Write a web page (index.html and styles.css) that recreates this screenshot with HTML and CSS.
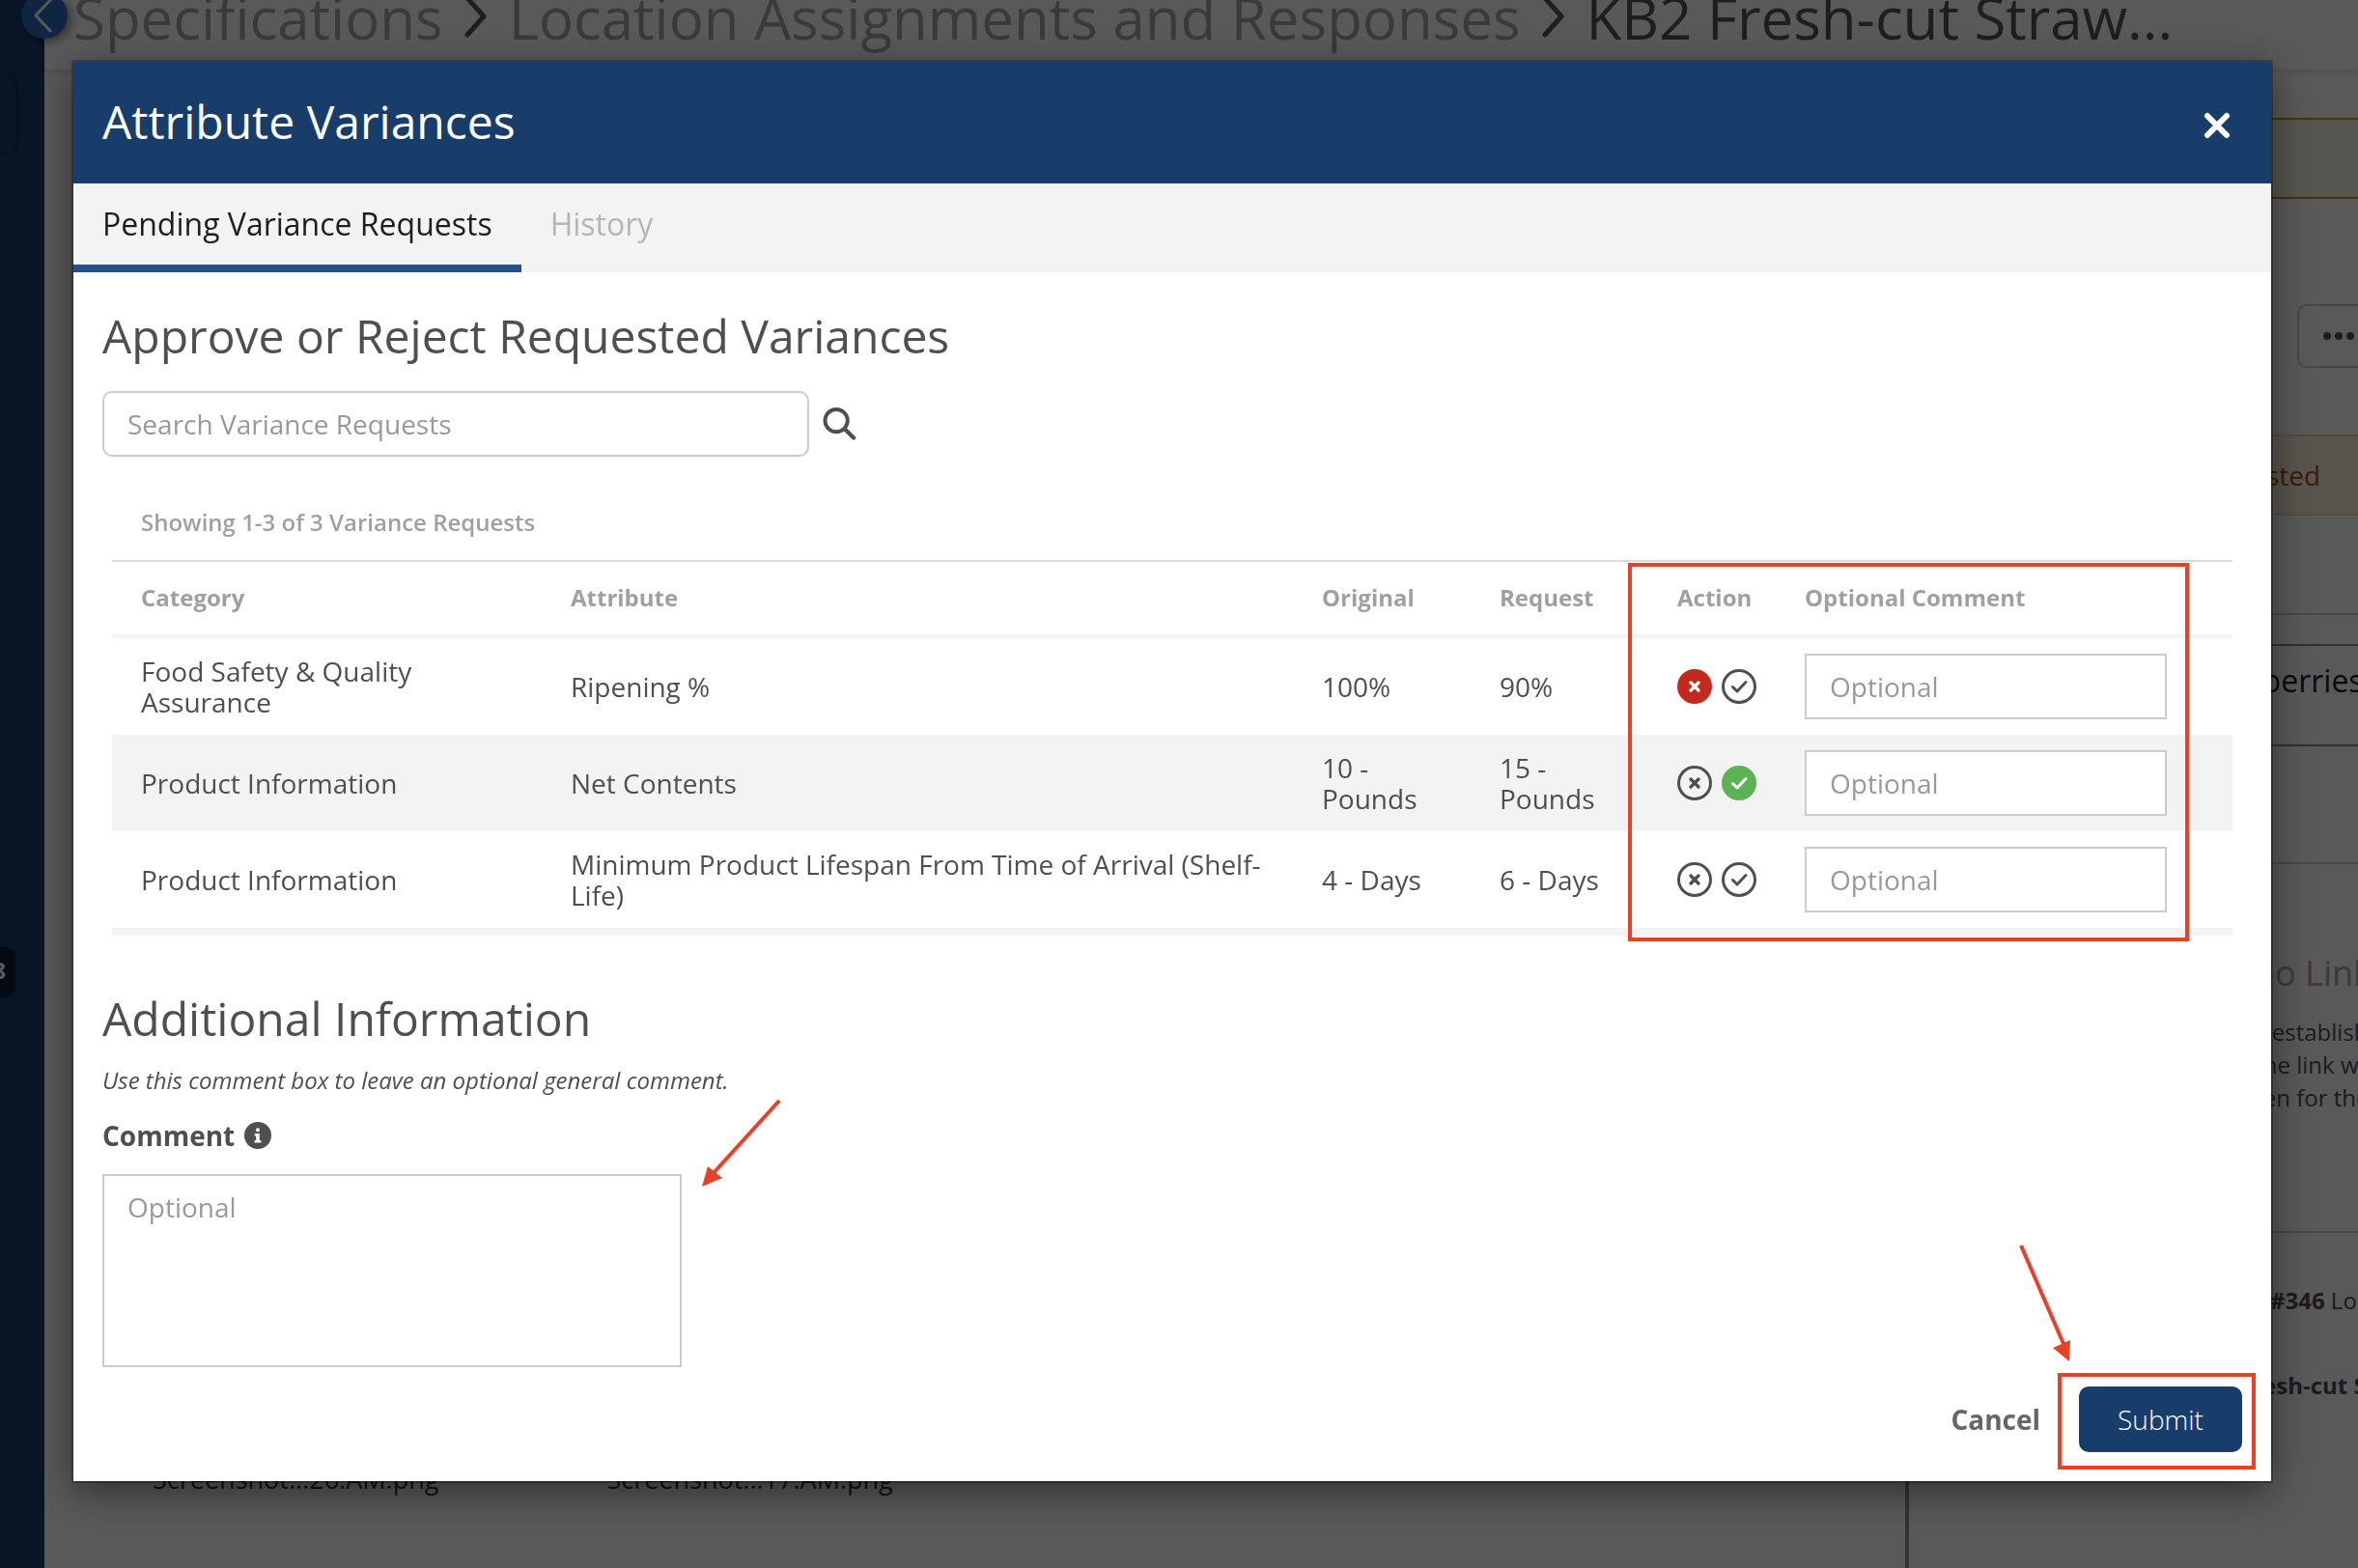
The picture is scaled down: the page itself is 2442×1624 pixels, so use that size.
FILE: index.html
```html
<!DOCTYPE html>
<html lang="en">
<head>
  <meta charset="utf-8">
  <title>Attribute Variances</title>
  <link rel="stylesheet" href="styles.css">
</head>
<body>
  <svg class="sprite" aria-hidden="true">
    <symbol id="icon-reject" viewBox="0 0 36 36">
      <path d="M14 14l8 8m0-8l-8 8" fill="none" stroke="currentColor" stroke-width="3.4" stroke-linecap="round"/>
    </symbol>
    <symbol id="icon-approve" viewBox="0 0 36 36">
      <path d="M11.5 18.5l4.5 4.5 9-9.5" fill="none" stroke="currentColor" stroke-width="3" stroke-linecap="round" stroke-linejoin="round"/>
    </symbol>
    <symbol id="icon-chevron" viewBox="0 0 24 44">
      <path d="M3 3l17 19L3 41" fill="none" stroke="currentColor" stroke-width="5" stroke-linecap="round" stroke-linejoin="round"/>
    </symbol>
  </svg>

  <!-- page behind the modal -->
  <div class="app">
    <nav class="sidebar">
      <div class="sidebar-item"></div>
      <div class="sidebar-badge">8</div>
    </nav>
    <div class="page">
      <header class="breadcrumb">
        <a href="#">Specifications</a>
        <svg><use href="#icon-chevron"/></svg>
        <a href="#">Location Assignments and Responses</a>
        <svg><use href="#icon-chevron"/></svg>
        <span>KB2 Fresh-cut Straw...</span>
      </header>
      <div class="columns">
        <div class="files">
          <span>Screenshot...26.AM.png</span>
          <span>Screenshot...17.AM.png</span>
        </div>
        <aside class="details">
          <div class="notice"></div>
          <button class="more" aria-label="More">
            <svg viewBox="0 0 32 8"><circle cx="4" cy="4" r="4"/><circle cx="16" cy="4" r="4"/><circle cx="28" cy="4" r="4"/></svg>
          </button>
          <div class="status">Requested</div>
          <div class="divider"></div>
          <div class="product">Strawberries</div>
          <div class="links">
            <h3>No Links</h3>
            <p>is establish<br>&nbsp;the link w<br>hen for the</p>
          </div>
          <div class="activity">
            <p><b>ID #346</b> Lo</p>
            <p><b>Fresh-cut S</b></p>
          </div>
        </aside>
      </div>
    </div>
    <button class="collapse" aria-label="Collapse menu">
      <svg viewBox="0 0 48 48"><path d="M30 8L15 24l15 16" fill="none" stroke="currentColor" stroke-width="3" stroke-linecap="round" stroke-linejoin="round"/></svg>
    </button>
  </div>

  <div class="overlay">
    <div class="modal" role="dialog" aria-labelledby="modal-title">
      <div class="modal-header">
        <h1 id="modal-title">Attribute Variances</h1>
        <button class="close" aria-label="Close">
          <svg viewBox="0 0 28 28"><path d="M4 4l20 20M24 4L4 24" stroke="currentColor" stroke-width="6" stroke-linecap="round"/></svg>
        </button>
      </div>

      <div class="tabs">
        <button class="tab active">Pending Variance Requests</button>
        <button class="tab">History</button>
      </div>

      <div class="modal-body">
        <h2>Approve or Reject Requested Variances</h2>
        <form class="search">
          <input type="text" placeholder="Search Variance Requests" aria-label="Search Variance Requests">
          <button type="button" aria-label="Search">
            <svg viewBox="0 0 36 36"><circle cx="14.5" cy="14" r="12" fill="none" stroke="currentColor" stroke-width="4"/><path d="M23.5 23l9.5 9.5" stroke="currentColor" stroke-width="4.4" stroke-linecap="round"/></svg>
          </button>
        </form>

        <div class="requests">
          <p class="count">Showing 1-3 of 3 Variance Requests</p>
          <table>
            <colgroup>
              <col class="col-category">
              <col>
              <col class="col-value">
              <col class="col-value">
              <col class="col-action">
              <col class="col-comment">
            </colgroup>
            <thead>
              <tr>
                <th>Category</th>
                <th>Attribute</th>
                <th>Original</th>
                <th>Request</th>
                <th>Action</th>
                <th>Optional Comment</th>
              </tr>
            </thead>
            <tbody>
              <tr>
                <td>Food Safety &amp; Quality Assurance</td>
                <td>Ripening %</td>
                <td>100%</td>
                <td>90%</td>
                <td>
                  <div class="actions">
                    <button class="rejected" aria-label="Reject"><svg><use href="#icon-reject"/></svg></button>
                    <button aria-label="Approve"><svg><use href="#icon-approve"/></svg></button>
                  </div>
                </td>
                <td><input type="text" placeholder="Optional" aria-label="Comment on Ripening %"></td>
              </tr>
              <tr>
                <td>Product Information</td>
                <td>Net Contents</td>
                <td>10 - Pounds</td>
                <td>15 - Pounds</td>
                <td>
                  <div class="actions">
                    <button aria-label="Reject"><svg><use href="#icon-reject"/></svg></button>
                    <button class="approved" aria-label="Approve"><svg><use href="#icon-approve"/></svg></button>
                  </div>
                </td>
                <td><input type="text" placeholder="Optional" aria-label="Comment on Net Contents"></td>
              </tr>
              <tr>
                <td>Product Information</td>
                <td>Minimum Product Lifespan From Time of Arrival (Shelf-Life)</td>
                <td>4 - Days</td>
                <td>6 - Days</td>
                <td>
                  <div class="actions">
                    <button aria-label="Reject"><svg><use href="#icon-reject"/></svg></button>
                    <button aria-label="Approve"><svg><use href="#icon-approve"/></svg></button>
                  </div>
                </td>
                <td><input type="text" placeholder="Optional" aria-label="Comment on Shelf-Life"></td>
              </tr>
            </tbody>
          </table>
          <div class="mark mark-table"></div>
        </div>

        <h2>Additional Information</h2>
        <p class="hint">Use this comment box to leave an optional general comment.</p>
        <div class="comment">
          <label for="comment">Comment
            <svg viewBox="0 0 28 28"><circle cx="14" cy="14" r="14" fill="currentColor"/><path d="M14 6.2a2 2 0 1 1 0 4 2 2 0 0 1 0-4zM10.8 12h5v7h1.6v2.4h-6.8V19h1.6v-4.6h-1.4z" fill="#fff"/></svg>
          </label>
          <textarea id="comment" placeholder="Optional"></textarea>
          <svg class="arrow arrow-comment" viewBox="0 0 84 92"><path d="M82 2L12 79" stroke="currentColor" stroke-width="4"/><path d="M2 91L8 70l15 12z" fill="currentColor"/></svg>
        </div>
      </div>

      <div class="modal-footer">
        <button class="cancel">Cancel</button>
        <div class="submit-wrap">
          <button class="submit">Submit</button>
          <div class="mark mark-submit"></div>
          <svg class="arrow arrow-submit" viewBox="0 0 56 124"><path d="M3 2l45 104" stroke="currentColor" stroke-width="4"/><path d="M53 122L36 108l18-8z" fill="currentColor"/></svg>
        </div>
      </div>
    </div>
  </div>
</body>
</html>
```
FILE: styles.css
```css
* {
  box-sizing: border-box;
}

body {
  margin: 0;
  font-family: "Open Sans", "Noto Sans", sans-serif;
  font-size: 28px;
  line-height: 32px;
  color: #4f4f4f;
  background-color: #fff;
  overflow: hidden;
}

h1,
h2,
h3,
p {
  margin: 0;
  font-weight: 400;
}

button {
  font: inherit;
  color: inherit;
  background: none;
  border: none;
  padding: 0;
  cursor: pointer;
}

svg {
  display: block;
}

.sprite {
  position: absolute;
  width: 0;
  height: 0;
}

/* page behind the modal */
.app {
  display: flex;
  height: 100vh;
  overflow: hidden;
}

.sidebar {
  flex: 0 0 46px;
  background-color: #193d6b;
  color: #fff;
}

.sidebar-item {
  width: 16px;
  height: 80px;
  margin-top: 79px;
  border-radius: 0 10px 10px 0;
  box-shadow: 0 0 6px rgba(0,0,0,0.4);
}

.sidebar-badge {
  width: 16px;
  height: 52px;
  margin-top: 822px;
  border-radius: 0 10px 10px 0;
  background-color: #0c1f38;
  font-size: 24px;
  font-weight: bold;
  line-height: 48px;
  direction: rtl;
  padding-right: 10px;
}

.collapse {
  position: absolute;
  left: 22px;
  top: -8px;
  width: 48px;
  height: 48px;
  border-radius: 50%;
  background-color: #2f6abb;
  color: #fff;
  box-shadow: 4px 4px 10px rgba(0,0,0,0.4);
}

.page {
  flex: 1;
  min-width: 0;
  display: flex;
  flex-direction: column;
}

.breadcrumb {
  display: flex;
  align-items: flex-end;
  gap: 22px;
  height: 72px;
  padding: 0 30px 18px;
  font-size: 60px;
  line-height: 72px;
  white-space: nowrap;
  color: #565656;
  box-shadow: 0 2px 8px rgba(0,0,0,0.15);
}

.breadcrumb a {
  color: #a6a6a6;
  text-decoration: none;
}

.breadcrumb svg {
  width: 24px;
  height: 44px;
  margin-bottom: 15px;
}

.columns {
  flex: 1;
  display: flex;
}

.files {
  flex: 1;
  display: flex;
  align-items: flex-end;
  gap: 174px;
  padding: 0 0 76px 112px;
  font-size: 27px;
  color: #333;
}

.details {
  flex: 0 0 469px;
  min-width: 0;
  overflow: hidden;
  border-left: 4px solid #959595;
  padding-top: 50px;
}

.notice {
  height: 84px;
  border-top: 2px solid #bf8f3c;
  border-bottom: 2px solid #bf8f3c;
  background-color: #f8f3e2;
}

.more {
  display: block;
  width: 98px;
  height: 66px;
  margin: 109px 0 69px 402px;
  padding-left: 25px;
  border: 2px solid #cbcbcb;
  border-radius: 10px;
}

.more svg {
  width: 32px;
  height: 8px;
  fill: #565656;
}

.status {
  height: 84px;
  padding: 24px 0 0 285px;
  border: 2px solid #f2d2b4;
  border-right: none;
  background-color: #fff0de;
  color: #9a5510;
}

.divider {
  height: 32px;
  margin-top: 101px;
  border-top: 2px solid #ccc;
}

.product {
  height: 106px;
  padding: 16px 0 0 279px;
  border: 2px solid #888;
  border-right: none;
  color: #222;
  font-size: 32px;
  line-height: 40px;
}

.links {
  height: 384px;
  margin-top: 120px;
  padding: 89px 0 0 352px;
  border-top: 2px solid #ccc;
  border-bottom: 2px solid #ccc;
  font-size: 24px;
  line-height: 34px;
  white-space: nowrap;
}

.links h3 {
  margin-bottom: 20px;
  font-size: 36px;
  line-height: 48px;
  color: #a6a6a6;
}

.activity {
  padding: 53px 0 0 342px;
  font-size: 24px;
  line-height: 34px;
  white-space: nowrap;
}

.activity p {
  margin-bottom: 54px;
}

/* modal */
.overlay {
  position: fixed;
  inset: 0;
  padding: 64px 90px 90px 76px;
  background-color: rgba(0,0,0,0.65);
}

.modal {
  display: flex;
  flex-direction: column;
  height: 100%;
  background-color: #fff;
  box-shadow: 0 0 0 2px rgba(0,0,0,0.25), 0 10px 40px rgba(0,0,0,0.5);
}

.modal-header {
  display: flex;
  justify-content: space-between;
  align-items: center;
  height: 126px;
  padding: 0 42px 2px 30px;
  background-color: #193d6b;
  color: #fff;
}

.modal-header h1 {
  font-size: 48px;
  line-height: 64px;
}

.close {
  padding-top: 8px;
}

.close svg {
  width: 28px;
  height: 28px;
}

.tabs {
  display: flex;
  height: 92px;
  background-color: #f3f3f3;
}

.tab {
  padding: 0 30px;
  border-bottom: 8px solid transparent;
  font-size: 32px;
  color: #b5b5b5;
}

.tab.active {
  border-color: #22528c;
  color: #1e1e1e;
}

.modal-body {
  flex: 1;
  padding: 34px 30px 0;
}

h2 {
  font-size: 48px;
  line-height: 64px;
}

input,
textarea {
  display: block;
  width: 100%;
  height: 68px;
  padding: 0 24px;
  border: 2px solid #ccc;
  background-color: #fff;
  font: inherit;
  color: inherit;
}

::placeholder {
  color: #999;
  opacity: 1;
}

.search {
  display: flex;
  align-items: center;
  gap: 14px;
  margin-top: 25px;
}

.search input {
  width: 732px;
  border-radius: 10px;
}

.search svg {
  width: 35px;
  height: 35px;
}

.requests {
  position: relative;
  margin: 52px 10px 54px;
}

.count {
  padding: 0 30px 23px;
  font-size: 24px;
  font-weight: 600;
  color: #a0a0a0;
}

table {
  width: 100%;
  table-layout: fixed;
  border-collapse: separate;
  border-spacing: 0;
  border-top: 2px solid #dcdcdc;
  border-bottom: 8px solid #f3f3f3;
}

.col-category {
  width: 445px;
}

.col-value {
  width: 184px;
}

.col-action {
  width: 132px;
}

.col-comment {
  width: 473px;
}

th {
  height: 79px;
  padding: 0 30px 2px;
  border-bottom: 4px solid #f3f3f3;
  font-size: 24px;
  text-align: left;
  white-space: nowrap;
  color: #a0a0a0;
}

td {
  height: 100px;
  padding: 0 30px;
}

td:nth-child(5) {
  padding-right: 0;
}

td:last-child {
  padding-right: 68px;
}

tbody tr:nth-child(even) {
  background-color: #f3f3f3;
}

.actions {
  display: flex;
  gap: 10px;
}

.actions button {
  width: 36px;
  height: 36px;
  border-radius: 50%;
  box-shadow: inset 0 0 0 3px #4f4f4f;
}

.actions svg {
  width: 36px;
  height: 36px;
}

.actions .rejected {
  background-color: #c5281c;
  box-shadow: none;
  color: #fff;
}

.actions .approved {
  background-color: #5cb254;
  box-shadow: none;
  color: #fff;
}

.hint {
  margin: 16px 0 25px;
  font-size: 24px;
  font-style: italic;
}

.comment {
  position: relative;
  width: 600px;
}

.comment label {
  display: flex;
  align-items: center;
  gap: 10px;
  font-weight: bold;
}

.comment label svg {
  width: 28px;
  height: 28px;
}

.comment textarea {
  height: 200px;
  margin-top: 24px;
  padding: 16px 24px;
  resize: none;
}

.modal-footer {
  display: flex;
  justify-content: flex-end;
  align-items: center;
  gap: 40px;
  padding: 0 30px 30px;
}

.cancel {
  font-weight: bold;
  color: #666;
}

.submit-wrap {
  position: relative;
}

.submit {
  height: 68px;
  padding: 0 40px;
  border-radius: 10px;
  background-color: #193d6b;
  color: #fff;
  font-weight: 300;
}

/* red callouts */
.mark {
  position: absolute;
  border: 4px solid #ea4025;
}

.mark-table {
  top: 58px;
  right: 45px;
  bottom: -6px;
  width: 581px;
}

.mark-submit {
  top: -14px;
  right: -14px;
  bottom: -18px;
  left: -22px;
}

.arrow {
  position: absolute;
  color: #ea4025;
}

.arrow-comment {
  left: 619px;
  bottom: 186px;
  width: 84px;
  height: 92px;
}

.arrow-submit {
  right: 176px;
  bottom: 92px;
  width: 56px;
  height: 124px;
}
```
